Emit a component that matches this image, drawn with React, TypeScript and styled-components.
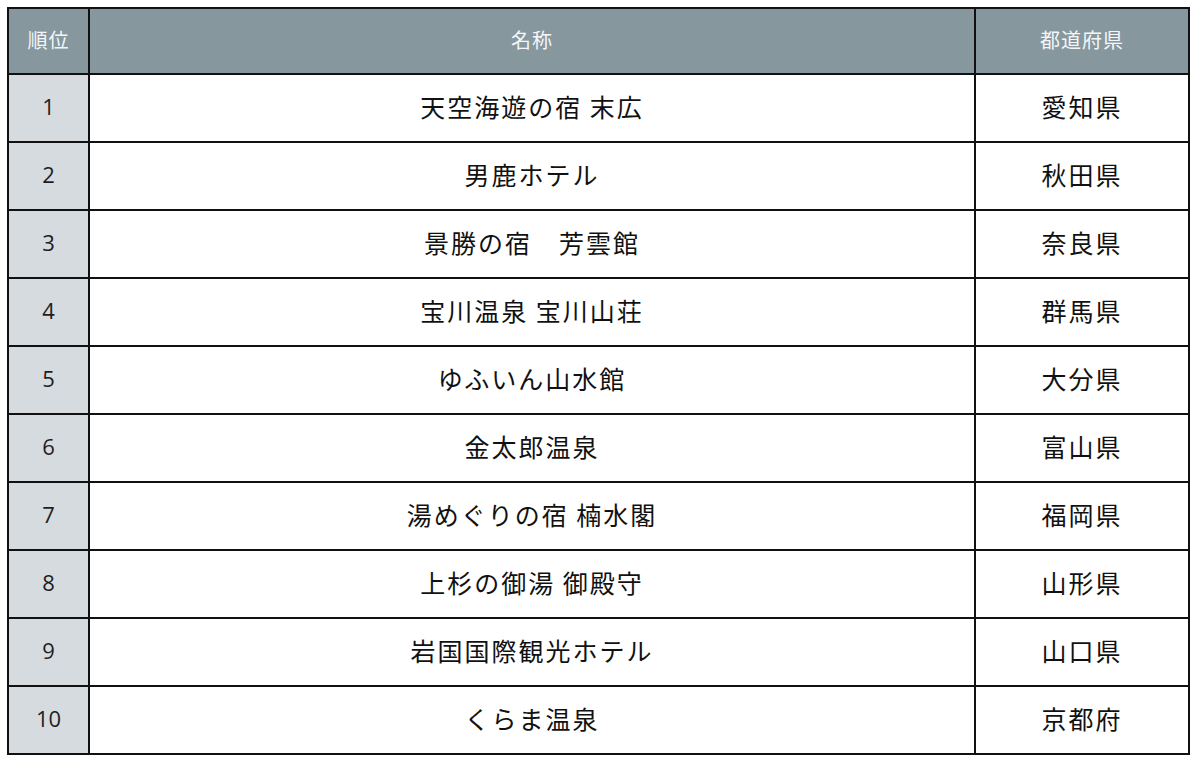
import React from 'react';
import styled, { createGlobalStyle } from 'styled-components';

const GlobalStyle = createGlobalStyle`
    body {
        margin: 0;
        background-color: white;
        font-family: 'Noto Sans CJK JP', 'Noto Sans', sans-serif;
    }
`;

const Page = styled.div`
    padding: 7px 0 0 7px;
`;

const Table = styled.table`
    border-collapse: collapse;
    table-layout: fixed;
    width: 1183px;
    border: 2px solid #111;
`;

const HeadCell = styled.th`
    height: 61px;
    padding: 0 0 3px 0;
    background-color: #86979e;
    color: #f4f6f7;
    font-weight: normal;
    font-size: 20px;
    line-height: 1.2;
    letter-spacing: 1px;
    border: 2px solid #111;
    text-align: center;
`;

const RankCell = styled.td`
    height: 63px;
    padding: 0 0 3px 0;
    background-color: #d6dbe0;
    color: #1e1e1e;
    font-family: 'Open Sans', 'Noto Sans', sans-serif;
    font-size: 22px;
    line-height: 1.2;
    border: 2px solid #111;
    text-align: center;
`;

const TextCell = styled.td`
    height: 61px;
    padding: 0 0 5px 0;
    background-color: white;
    color: #111;
    font-size: 25px;
    line-height: 1.2;
    letter-spacing: 2px;
    border: 2px solid #111;
    text-align: center;
`;

const hotels = [
    { rank: 1, name: '天空海遊の宿 末広', pref: '愛知県' },
    { rank: 2, name: '男鹿ホテル', pref: '秋田県' },
    { rank: 3, name: '景勝の宿\u3000芳雲館', pref: '奈良県' },
    { rank: 4, name: '宝川温泉 宝川山荘', pref: '群馬県' },
    { rank: 5, name: 'ゆふいん山水館', pref: '大分県' },
    { rank: 6, name: '金太郎温泉', pref: '富山県' },
    { rank: 7, name: '湯めぐりの宿 楠水閣', pref: '福岡県' },
    { rank: 8, name: '上杉の御湯 御殿守', pref: '山形県' },
    { rank: 9, name: '岩国国際観光ホテル', pref: '山口県' },
    { rank: 10, name: 'くらま温泉', pref: '京都府' },
];

function App() {
    return (
        <Page>
            <GlobalStyle />
            <Table>
                <colgroup>
                    <col style={{ width: 81 }} />
                    <col style={{ width: 886 }} />
                    <col />
                </colgroup>
                <thead>
                    <tr>
                        <HeadCell>順位</HeadCell>
                        <HeadCell>名称</HeadCell>
                        <HeadCell>都道府県</HeadCell>
                    </tr>
                </thead>
                <tbody>
                    {hotels.map((h) => (
                        <tr key={h.rank}>
                            <RankCell>{h.rank}</RankCell>
                            <TextCell>{h.name}</TextCell>
                            <TextCell>{h.pref}</TextCell>
                        </tr>
                    ))}
                </tbody>
            </Table>
        </Page>
    );
}

export default App;
